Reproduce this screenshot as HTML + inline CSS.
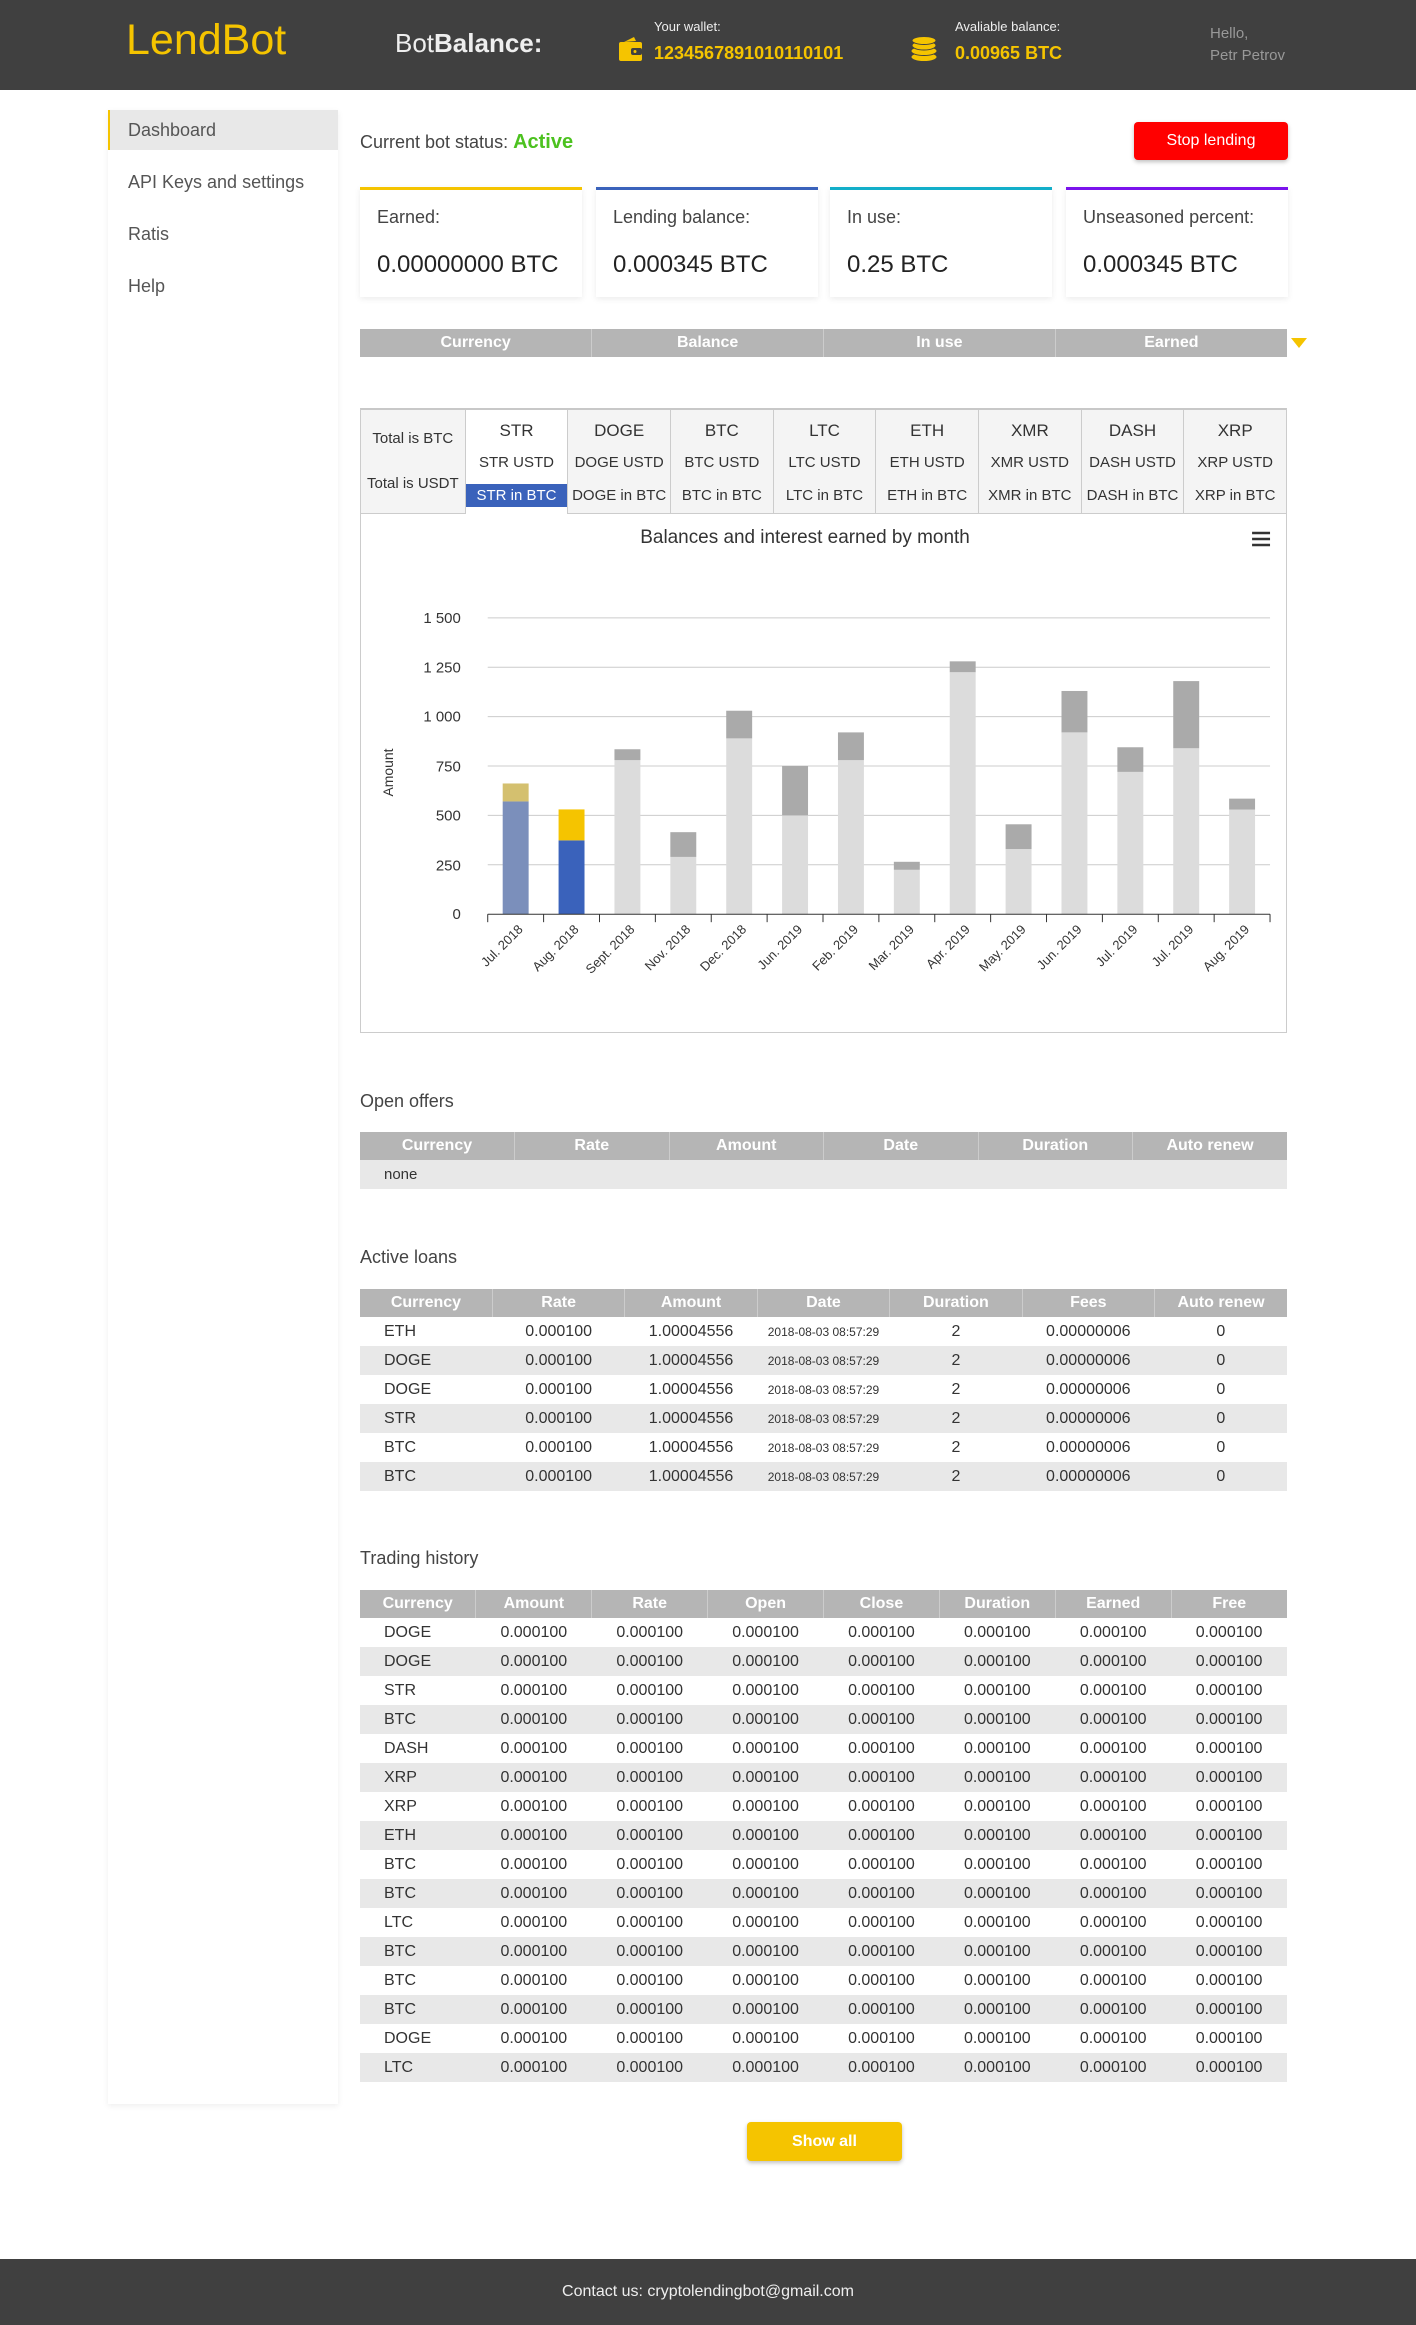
<!DOCTYPE html>
<html><head><meta charset="utf-8"><style>
*{margin:0;padding:0;box-sizing:border-box}
body{width:1416px;height:2325px;position:relative;background:#fff;font-family:"Liberation Sans",Arial,sans-serif;color:#333;overflow:hidden}
.abs{position:absolute}
.hdr{left:0;top:0;width:1416px;height:90px;background:#404040}
.side{left:108px;top:110px;width:230px;height:1994px;background:#fff;box-shadow:0 2px 6px rgba(0,0,0,.07)}
.side div{height:40px;line-height:40px;padding-left:20px;font-size:18px;color:#555;margin-bottom:12px}
.side .act{background:#e8e8e8;border-left:2px solid #f5c400;padding-left:18px}
.card{background:#fff;box-shadow:0 2px 6px rgba(0,0,0,.08);height:110px;top:187px;width:222px}
.card .l{position:absolute;left:17px;top:17px;font-size:18px;color:#444}
.card .v{position:absolute;left:17px;top:61px;font-size:24px;color:#222}
table{border-collapse:collapse;table-layout:fixed;position:absolute;left:360px;width:927px}
th{background:#b5b5b5;color:#fff;font-weight:bold;font-size:16px;height:28px;position:relative}
th+th{border-left:1px solid #ccc}
td{font-size:16px;height:29px;text-align:center;color:#333}
td:first-child{text-align:left;padding-left:24px}
tr.g td{background:#e8e8e8}
.sec{left:360px;font-size:18px;color:#444}
.tabs{left:360px;top:408px;width:927px;height:106px;border-top:2px solid #c8c8c8;border-left:1px solid #ccc;border-right:1px solid #ccc;background:#f4f4f4;display:flex}
.tab{width:103px;border-left:1px solid #ccc;text-align:center;font-size:15px;color:#333;position:relative;border-bottom:1px solid #ccc}
.tab .a{position:absolute;top:11px;left:0;right:0;font-size:17px}
.tab .b{position:absolute;top:44px;left:0;right:0}
.tab .c{position:absolute;top:74px;left:0;right:0;height:23px;line-height:23px}
.tab.on{background:#fff;border-bottom:none}
.tab.on .c{background:#3a62bb;color:#fff}
</style></head><body>
<div class="abs hdr"></div>
<div class="abs" style="left:126px;top:16px;font-size:43px;color:#f5c400">LendBot</div>
<div class="abs" style="left:395px;top:28px;font-size:26px;color:#eee">Bot<b>Balance:</b></div>
<svg class="abs" style="left:618px;top:36px" width="26" height="26" viewBox="0 0 26 26"><path d="M6 6 L16 1 L18 5 Z" fill="#f5c400"/><rect x="1" y="6" width="23" height="19" rx="2" fill="#f5c400"/><rect x="13" y="12" width="11" height="7" rx="2" fill="#404040"/><circle cx="17" cy="15.5" r="1.5" fill="#f5c400"/></svg>
<div class="abs" style="left:654px;top:19px;font-size:13px;color:#eee">Your wallet:</div>
<div class="abs" style="left:654px;top:43px;font-size:18px;color:#f5c400;font-weight:bold">1234567891010110101</div>
<svg class="abs" style="left:910px;top:36px" width="28" height="26" viewBox="0 0 28 26"><g fill="#f5c400" stroke="#404040" stroke-width="1"><ellipse cx="14" cy="21" rx="13" ry="4.5"/><ellipse cx="14" cy="15" rx="13" ry="4.5"/><ellipse cx="14" cy="9.5" rx="12" ry="4.5"/><ellipse cx="14" cy="4.5" rx="12" ry="4"/></g></svg>
<div class="abs" style="left:955px;top:19px;font-size:13px;color:#eee">Avaliable balance:</div>
<div class="abs" style="left:955px;top:43px;font-size:18px;color:#f5c400;font-weight:bold">0.00965 BTC</div>
<div class="abs" style="left:1210px;top:23px;font-size:15px;color:#999;line-height:22px">Hello,<br>Petr Petrov</div>

<div class="abs side"><div class="act">Dashboard</div><div>API Keys and settings</div><div>Ratis</div><div>Help</div></div>

<div class="abs" style="left:360px;top:131px;font-size:18px;color:#444">Current bot status: <span style="color:#4cc21f;font-weight:bold;font-size:20px">Active</span></div>
<div class="abs" style="left:1134px;top:122px;width:154px;height:38px;background:#ff0000;border-radius:4px;color:#fff;font-size:16px;text-align:center;line-height:38px;box-shadow:0 2px 4px rgba(0,0,0,.25)">Stop lending</div>

<div class="abs card" style="left:360px;border-top:3px solid #f5c400"><div class="l">Earned:</div><div class="v">0.00000000 BTC</div></div>
<div class="abs card" style="left:596px;border-top:3px solid #3a62bb"><div class="l">Lending balance:</div><div class="v">0.000345 BTC</div></div>
<div class="abs card" style="left:830px;border-top:3px solid #12aec9"><div class="l">In use:</div><div class="v">0.25 BTC</div></div>
<div class="abs card" style="left:1066px;border-top:3px solid #7a13ec"><div class="l">Unseasoned percent:</div><div class="v">0.000345 BTC</div></div>

<table style="top:329px"><tr><th>Currency</th><th>Balance</th><th>In use</th><th>Earned</th></tr></table>
<div class="abs" style="left:1291px;top:338px;width:0;height:0;border-left:8px solid transparent;border-right:8px solid transparent;border-top:10px solid #f5c400"></div>

<div class="abs tabs">
<div class="tab" style="border-left:none;width:104px"><div style="position:absolute;top:20px;left:0;right:0;font-size:15px">Total is BTC</div><div style="position:absolute;top:65px;left:0;right:0;font-size:15px">Total is USDT</div></div>
<div class="tab on"><div class="a">STR</div><div class="b">STR USTD</div><div class="c">STR in BTC</div></div>
<div class="tab"><div class="a">DOGE</div><div class="b">DOGE USTD</div><div class="c">DOGE in BTC</div></div>
<div class="tab"><div class="a">BTC</div><div class="b">BTC USTD</div><div class="c">BTC in BTC</div></div>
<div class="tab"><div class="a">LTC</div><div class="b">LTC USTD</div><div class="c">LTC in BTC</div></div>
<div class="tab"><div class="a">ETH</div><div class="b">ETH USTD</div><div class="c">ETH in BTC</div></div>
<div class="tab"><div class="a">XMR</div><div class="b">XMR USTD</div><div class="c">XMR in BTC</div></div>
<div class="tab"><div class="a">DASH</div><div class="b">DASH USTD</div><div class="c">DASH in BTC</div></div>
<div class="tab"><div class="a">XRP</div><div class="b">XRP USTD</div><div class="c">XRP in BTC</div></div>
</div>

<svg class="abs" style="left:360px;top:513px;border:1px solid #ccc;border-top:none" width="927" height="520" viewBox="0 0 927 520" font-family="Liberation Sans, Arial, sans-serif">
<text x="445" y="30" text-anchor="middle" font-size="19" fill="#333">Balances and interest earned by month</text>
<g stroke="#333" stroke-width="2.5"><line x1="893" y1="20" x2="911" y2="20"/><line x1="893" y1="26" x2="911" y2="26"/><line x1="893" y1="32" x2="911" y2="32"/></g>
<g stroke="#ccc" stroke-width="1"><line x1="127" y1="105" x2="911" y2="105"/><line x1="127" y1="154.5" x2="911" y2="154.5"/><line x1="127" y1="204" x2="911" y2="204"/><line x1="127" y1="253.5" x2="911" y2="253.5"/><line x1="127" y1="303" x2="911" y2="303"/><line x1="127" y1="352.5" x2="911" y2="352.5"/></g>
<g font-size="15" fill="#333" text-anchor="end"><text x="100" y="110">1 500</text><text x="100" y="160">1 250</text><text x="100" y="209">1 000</text><text x="100" y="259">750</text><text x="100" y="308">500</text><text x="100" y="358">250</text><text x="100" y="407">0</text></g>
<text transform="translate(32,260) rotate(-90)" text-anchor="middle" font-size="14" fill="#333">Amount</text>
<rect x="142" y="289" width="26" height="113" fill="#7b8fbb"/><rect x="142" y="271" width="26" height="18" fill="#d4c06f"/>
<rect x="198" y="328" width="26" height="74" fill="#3a62bb"/><rect x="198" y="297" width="26" height="31" fill="#f5c400"/>
<g fill="#dcdcdc">
<rect x="254" y="247.6" width="26" height="154.4"/><rect x="310" y="344.6" width="26" height="57.4"/><rect x="366" y="225.8" width="26" height="176.2"/><rect x="422" y="303" width="26" height="99"/><rect x="478" y="247.6" width="26" height="154.4"/><rect x="534" y="357.5" width="26" height="44.5"/><rect x="590" y="159.5" width="26" height="242.5"/><rect x="646" y="336.7" width="26" height="65.3"/><rect x="702" y="219.8" width="26" height="182.2"/><rect x="758" y="259.4" width="26" height="142.6"/><rect x="814" y="235.7" width="26" height="166.3"/><rect x="870" y="297.1" width="26" height="104.9"/></g>
<g fill="#aaaaaa">
<rect x="254" y="236.7" width="26" height="10.9"/><rect x="310" y="319.8" width="26" height="24.8"/><rect x="366" y="198.1" width="26" height="27.7"/><rect x="422" y="253.5" width="26" height="49.5"/><rect x="478" y="219.8" width="26" height="27.8"/><rect x="534" y="349.5" width="26" height="8"/><rect x="590" y="148.6" width="26" height="10.9"/><rect x="646" y="311.9" width="26" height="24.8"/><rect x="702" y="178.3" width="26" height="41.5"/><rect x="758" y="234.7" width="26" height="24.7"/><rect x="814" y="168.4" width="26" height="67.3"/><rect x="870" y="286.2" width="26" height="10.9"/></g>
<line x1="127" y1="402" x2="911" y2="402" stroke="#333"/>
<g stroke="#333"><line x1="127" y1="402" x2="127" y2="410"/><line x1="183" y1="402" x2="183" y2="410"/><line x1="239" y1="402" x2="239" y2="410"/><line x1="295" y1="402" x2="295" y2="410"/><line x1="351" y1="402" x2="351" y2="410"/><line x1="407" y1="402" x2="407" y2="410"/><line x1="463" y1="402" x2="463" y2="410"/><line x1="519" y1="402" x2="519" y2="410"/><line x1="575" y1="402" x2="575" y2="410"/><line x1="631" y1="402" x2="631" y2="410"/><line x1="687" y1="402" x2="687" y2="410"/><line x1="743" y1="402" x2="743" y2="410"/><line x1="799" y1="402" x2="799" y2="410"/><line x1="855" y1="402" x2="855" y2="410"/><line x1="911" y1="402" x2="911" y2="410"/></g>
<g font-size="13" fill="#333" text-anchor="end">
<text transform="translate(163,418) rotate(-45)">Jul. 2018</text><text transform="translate(219,418) rotate(-45)">Aug. 2018</text><text transform="translate(275,418) rotate(-45)">Sept. 2018</text><text transform="translate(331,418) rotate(-45)">Nov. 2018</text><text transform="translate(387,418) rotate(-45)">Dec. 2018</text><text transform="translate(443,418) rotate(-45)">Jun. 2019</text><text transform="translate(499,418) rotate(-45)">Feb. 2019</text><text transform="translate(555,418) rotate(-45)">Mar. 2019</text><text transform="translate(611,418) rotate(-45)">Apr. 2019</text><text transform="translate(667,418) rotate(-45)">May. 2019</text><text transform="translate(723,418) rotate(-45)">Jun. 2019</text><text transform="translate(779,418) rotate(-45)">Jul. 2019</text><text transform="translate(835,418) rotate(-45)">Jul. 2019</text><text transform="translate(891,418) rotate(-45)">Aug. 2019</text></g>
</svg>

<div class="abs sec" style="top:1091px">Open offers</div>
<table style="top:1132px"><tr><th>Currency</th><th>Rate</th><th>Amount</th><th>Date</th><th>Duration</th><th>Auto renew</th></tr>
<tr class="g"><td colspan="6" style="text-align:left;padding-left:24px;font-size:15px">none</td></tr></table>

<div class="abs sec" style="top:1247px">Active loans</div>
<table style="top:1289px"><tr><th>Currency</th><th>Rate</th><th>Amount</th><th>Date</th><th>Duration</th><th>Fees</th><th>Auto renew</th></tr>
<tr><td>ETH</td><td>0.000100</td><td>1.00004556</td><td style="font-size:12px">2018-08-03 08:57:29</td><td>2</td><td>0.00000006</td><td>0</td></tr>
<tr class="g"><td>DOGE</td><td>0.000100</td><td>1.00004556</td><td style="font-size:12px">2018-08-03 08:57:29</td><td>2</td><td>0.00000006</td><td>0</td></tr>
<tr><td>DOGE</td><td>0.000100</td><td>1.00004556</td><td style="font-size:12px">2018-08-03 08:57:29</td><td>2</td><td>0.00000006</td><td>0</td></tr>
<tr class="g"><td>STR</td><td>0.000100</td><td>1.00004556</td><td style="font-size:12px">2018-08-03 08:57:29</td><td>2</td><td>0.00000006</td><td>0</td></tr>
<tr><td>BTC</td><td>0.000100</td><td>1.00004556</td><td style="font-size:12px">2018-08-03 08:57:29</td><td>2</td><td>0.00000006</td><td>0</td></tr>
<tr class="g"><td>BTC</td><td>0.000100</td><td>1.00004556</td><td style="font-size:12px">2018-08-03 08:57:29</td><td>2</td><td>0.00000006</td><td>0</td></tr></table>

<div class="abs sec" style="top:1548px">Trading history</div>
<table style="top:1590px"><tr><th>Currency</th><th>Amount</th><th>Rate</th><th>Open</th><th>Close</th><th>Duration</th><th>Earned</th><th>Free</th></tr>
<tr><td>DOGE</td><td>0.000100</td><td>0.000100</td><td>0.000100</td><td>0.000100</td><td>0.000100</td><td>0.000100</td><td>0.000100</td></tr>
<tr class="g"><td>DOGE</td><td>0.000100</td><td>0.000100</td><td>0.000100</td><td>0.000100</td><td>0.000100</td><td>0.000100</td><td>0.000100</td></tr>
<tr><td>STR</td><td>0.000100</td><td>0.000100</td><td>0.000100</td><td>0.000100</td><td>0.000100</td><td>0.000100</td><td>0.000100</td></tr>
<tr class="g"><td>BTC</td><td>0.000100</td><td>0.000100</td><td>0.000100</td><td>0.000100</td><td>0.000100</td><td>0.000100</td><td>0.000100</td></tr>
<tr><td>DASH</td><td>0.000100</td><td>0.000100</td><td>0.000100</td><td>0.000100</td><td>0.000100</td><td>0.000100</td><td>0.000100</td></tr>
<tr class="g"><td>XRP</td><td>0.000100</td><td>0.000100</td><td>0.000100</td><td>0.000100</td><td>0.000100</td><td>0.000100</td><td>0.000100</td></tr>
<tr><td>XRP</td><td>0.000100</td><td>0.000100</td><td>0.000100</td><td>0.000100</td><td>0.000100</td><td>0.000100</td><td>0.000100</td></tr>
<tr class="g"><td>ETH</td><td>0.000100</td><td>0.000100</td><td>0.000100</td><td>0.000100</td><td>0.000100</td><td>0.000100</td><td>0.000100</td></tr>
<tr><td>BTC</td><td>0.000100</td><td>0.000100</td><td>0.000100</td><td>0.000100</td><td>0.000100</td><td>0.000100</td><td>0.000100</td></tr>
<tr class="g"><td>BTC</td><td>0.000100</td><td>0.000100</td><td>0.000100</td><td>0.000100</td><td>0.000100</td><td>0.000100</td><td>0.000100</td></tr>
<tr><td>LTC</td><td>0.000100</td><td>0.000100</td><td>0.000100</td><td>0.000100</td><td>0.000100</td><td>0.000100</td><td>0.000100</td></tr>
<tr class="g"><td>BTC</td><td>0.000100</td><td>0.000100</td><td>0.000100</td><td>0.000100</td><td>0.000100</td><td>0.000100</td><td>0.000100</td></tr>
<tr><td>BTC</td><td>0.000100</td><td>0.000100</td><td>0.000100</td><td>0.000100</td><td>0.000100</td><td>0.000100</td><td>0.000100</td></tr>
<tr class="g"><td>BTC</td><td>0.000100</td><td>0.000100</td><td>0.000100</td><td>0.000100</td><td>0.000100</td><td>0.000100</td><td>0.000100</td></tr>
<tr><td>DOGE</td><td>0.000100</td><td>0.000100</td><td>0.000100</td><td>0.000100</td><td>0.000100</td><td>0.000100</td><td>0.000100</td></tr>
<tr class="g"><td>LTC</td><td>0.000100</td><td>0.000100</td><td>0.000100</td><td>0.000100</td><td>0.000100</td><td>0.000100</td><td>0.000100</td></tr></table>

<div class="abs" style="left:747px;top:2122px;width:155px;height:39px;background:#f5c400;border-radius:4px;color:#fff;font-weight:bold;font-size:16px;text-align:center;line-height:39px;box-shadow:0 2px 4px rgba(0,0,0,.25)">Show all</div>

<div class="abs" style="left:0;top:2259px;width:1416px;height:66px;background:#404040;color:#eee;font-size:16px;text-align:center;line-height:66px">Contact us: cryptolendingbot@gmail.com</div>
</body></html>
